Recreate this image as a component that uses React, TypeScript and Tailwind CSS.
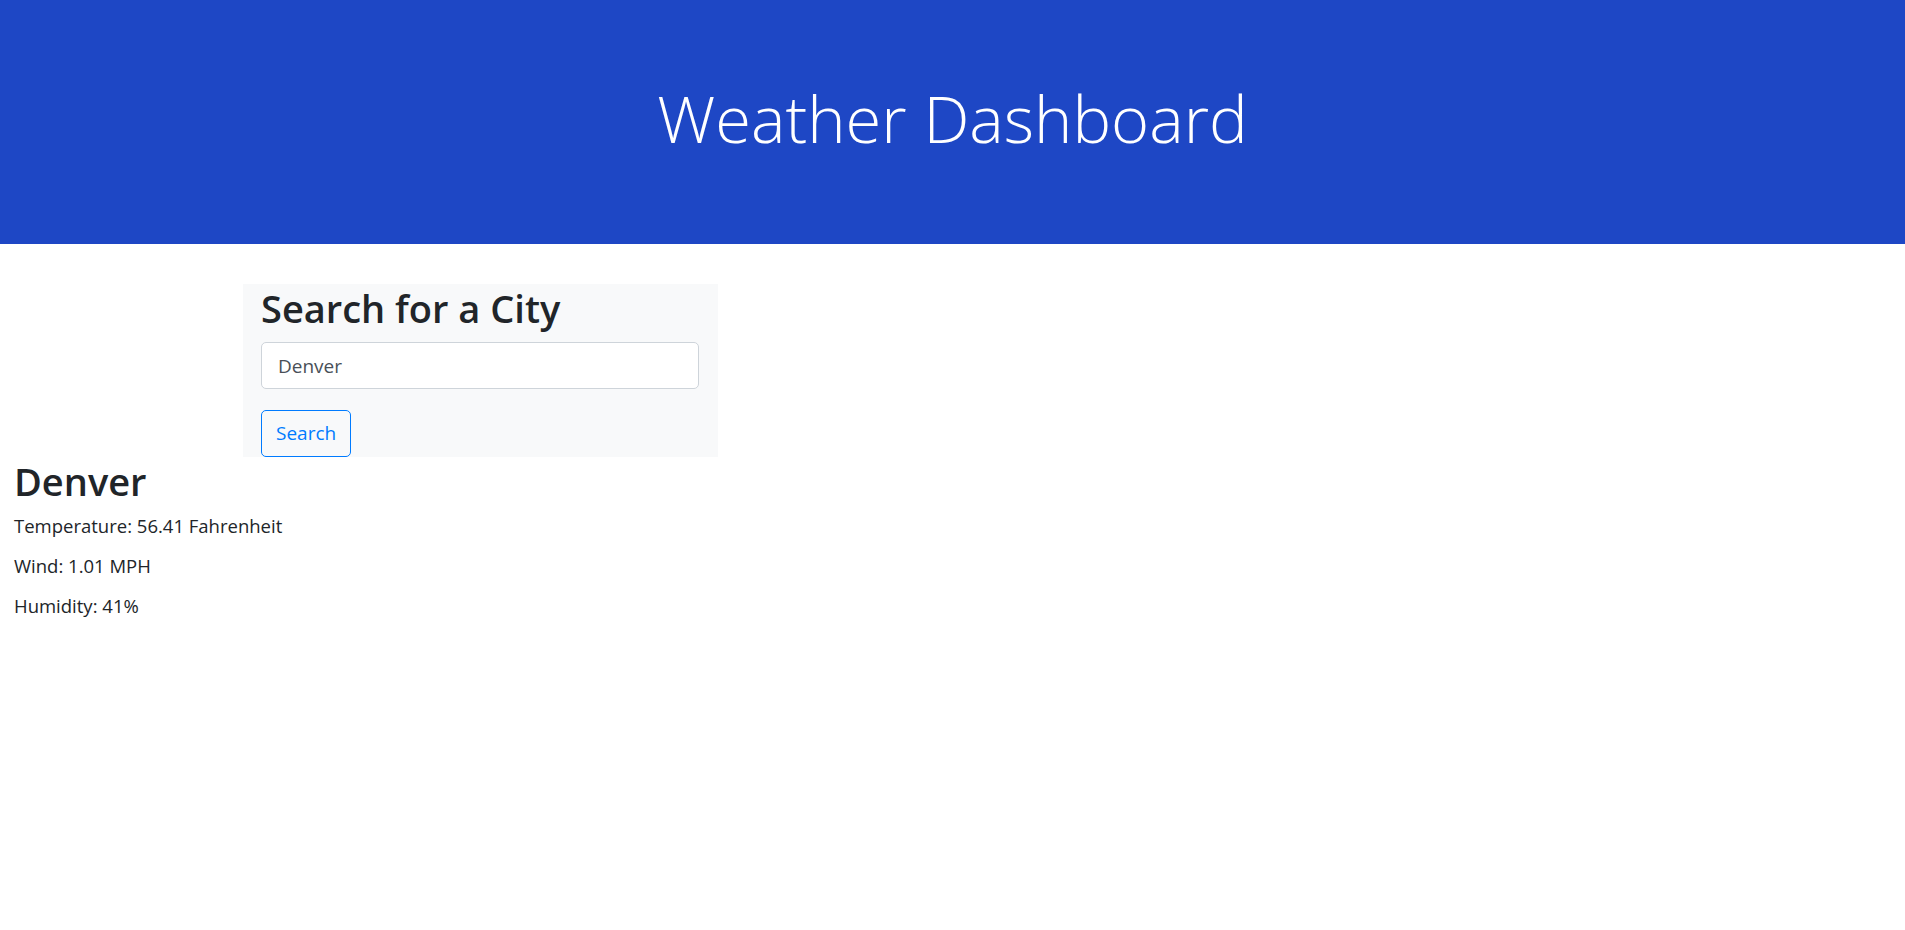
export default function App() {
  const city = "Denver";
  const stats = [
    "Temperature: 56.41 Fahrenheit",
    "Wind: 1.01 MPH",
    "Humidity: 41%",
  ];

  return (
    <div className="min-h-screen bg-white text-[#212529] font-['Open_Sans',sans-serif]">
      {/* ─── Header ─── */}
      <header className="h-[244px] bg-[#1e47c5] flex items-center justify-center">
        <h1 className="text-[65px] font-light leading-[1.2] text-white mb-[8px]">
          Weather Dashboard
        </h1>
      </header>

      {/* ─── Search panel ─── */}
      <section className="mt-[40px] ml-[243px] w-[475px] bg-[#f8f9fa] pl-[18px]">
        <h2 className="text-[38px] font-semibold leading-[48px] mb-[10px]">
          Search for a City
        </h2>
        <input
          type="text"
          defaultValue={city}
          className="block w-[438px] h-[47px] px-[16px] text-[19px] text-[#495057] bg-white border border-[#ced4da] rounded-[5px] outline-none"
        />
        <button className="mt-[21px] h-[47px] px-[14px] text-[19px] text-[#007bff] border border-[#007bff] rounded-[5px] bg-transparent">
          Search
        </button>
      </section>

      {/* ─── Current weather ─── */}
      <section className="pl-[14px]">
        <h2 className="text-[38px] font-semibold leading-[48px] mb-[6px]">{city}</h2>
        {stats.map((s) => (
          <p key={s} className="text-[18.5px] leading-[30px] mb-[10px]">
            {s}
          </p>
        ))}
      </section>
    </div>
  );
}
